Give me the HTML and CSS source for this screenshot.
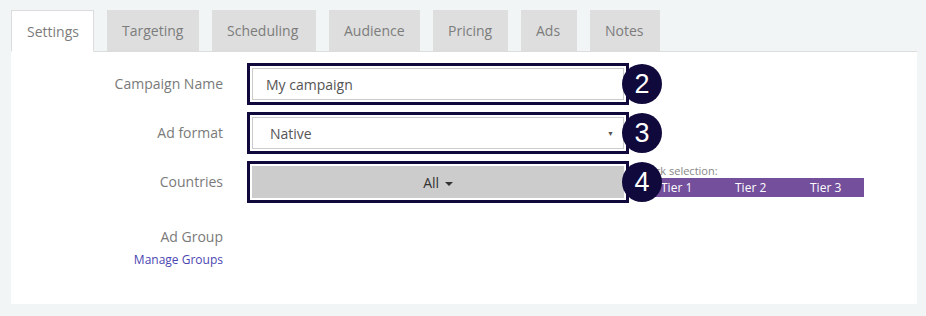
FILE: index.html
```html
<!DOCTYPE html>
<html lang="en">
<head>
    <meta charset="UTF-8">
    <title>Campaign settings</title>
    <link rel="stylesheet" href="styles.css">
</head>
<body>
    <div id="tabs">
        <div class="tab active">Settings</div>
        <div class="tab">Targeting</div>
        <div class="tab">Scheduling</div>
        <div class="tab">Audience</div>
        <div class="tab">Pricing</div>
        <div class="tab">Ads</div>
        <div class="tab">Notes</div>
    </div>

    <div id="panel">
        <div class="form-row">
            <label class="form-label">Campaign Name</label>
            <div class="field marked">
                <input class="text-input" type="text" value="My campaign">
                <span class="step">2</span>
            </div>
        </div>

        <div class="form-row">
            <label class="form-label">Ad format</label>
            <div class="field marked">
                <div class="select-box">
                    <span>Native</span>
                    <span class="select-arrow">&#9660;</span>
                </div>
                <span class="step">3</span>
            </div>
        </div>

        <div class="form-row">
            <label class="form-label">Countries</label>
            <div class="field marked">
                <button class="country-button">All <span class="caret"></span></button>
                <span class="step">4</span>
            </div>
            <div id="quick-select">
                <div class="quick-label">Quick selection:</div>
                <div class="tier-bar">
                    <span>Tier 1</span>
                    <span>Tier 2</span>
                    <span>Tier 3</span>
                </div>
            </div>
        </div>

        <div class="form-row group-row">
            <div class="form-label">
                <div>Ad Group</div>
                <a class="manage-link" href="#">Manage Groups</a>
            </div>
        </div>
    </div>
</body>
</html>
```

FILE: styles.css
```css
body {
    margin: 0;
    padding: 10px 9px 0 11px;
    background-color: #f2f5f6;
    font-family: "Open Sans", "Liberation Sans", sans-serif;
    font-size: 14px;
    color: #777;
}

#tabs {
    display: flex;
    gap: 13px;
    border-bottom: 1px solid #dcdcdc;
}

.tab {
    height: 40px;
    line-height: 42px;
    padding: 0 15px;
    margin-bottom: -1px;
    background-color: #dedede;
    color: #7c7c7c;
    border-bottom: 1px solid #dcdcdc;
}

.tab:nth-child(2) { width: 62px; }
.tab:nth-child(3) { width: 74px; }
.tab:nth-child(4) { width: 61px; }
.tab:nth-child(5) { width: 45px; }
.tab:nth-child(6) { width: 26px; }
.tab:nth-child(7) { width: 40px; }

.tab.active {
    width: 51px;
    height: 40px;
    background-color: #fff;
    border: 1px solid #dcdcdc;
    border-bottom-color: #fff;
    line-height: 41px;
}

#panel {
    height: 236px;
    padding-top: 16px;
    background-color: #fff;
}

.form-row {
    display: flex;
    align-items: flex-start;
    margin-bottom: 17px;
}

.form-label {
    width: 212px;
    margin-right: 29px;
    text-align: right;
    line-height: 32px;
    color: #7a7a7a;
}

.field {
    position: relative;
    width: 372px;
    height: 32px;
}

.field.marked {
    outline: 3px solid #100a3c;
    outline-offset: 2px;
}

.text-input,
.select-box,
.country-button {
    box-sizing: border-box;
    width: 372px;
    height: 32px;
    font-family: "Open Sans", "Liberation Sans", sans-serif;
    font-size: 14px;
    color: #555;
}

.text-input {
    padding: 0 13px;
    border: 1px solid #ccc;
    outline: none;
}

.select-box {
    display: flex;
    align-items: center;
    justify-content: space-between;
    padding: 0 9px 0 17px;
    border: 1px solid #ccc;
}

.select-arrow {
    font-size: 7px;
    color: #555;
}

.country-button {
    border: none;
    background-color: #ccc;
    color: #333;
    cursor: pointer;
}

.caret {
    display: inline-block;
    margin-left: 2px;
    vertical-align: middle;
    border-top: 4px solid #333;
    border-left: 4px solid transparent;
    border-right: 4px solid transparent;
}

.step {
    position: absolute;
    left: 370px;
    top: -4px;
    width: 40px;
    height: 40px;
    border-radius: 50%;
    background-color: #100a3c;
    color: #fff;
    font-family: "Liberation Sans", Arial, sans-serif;
    font-size: 27px;
    line-height: 41px;
    text-align: center;
}

#quick-select {
    margin-left: 13px;
    margin-top: -3px;
}

.quick-label {
    font-size: 11px;
    line-height: 15px;
    color: #888;
}

.tier-bar {
    display: grid;
    grid-template-columns: 74px 75px 60px;
    margin-left: 18px;
    height: 19px;
    background-color: #734f9c;
    color: #fff;
    font-size: 12px;
    line-height: 19px;
}

.tier-bar span {
    padding-left: 6px;
}

.group-row {
    padding-top: 12px;
}

.group-row .form-label {
    line-height: 20px;
}

.manage-link {
    display: block;
    margin-top: 5px;
    font-size: 12px;
    line-height: 16px;
    color: #4b46b2;
    text-decoration: none;
}
```
